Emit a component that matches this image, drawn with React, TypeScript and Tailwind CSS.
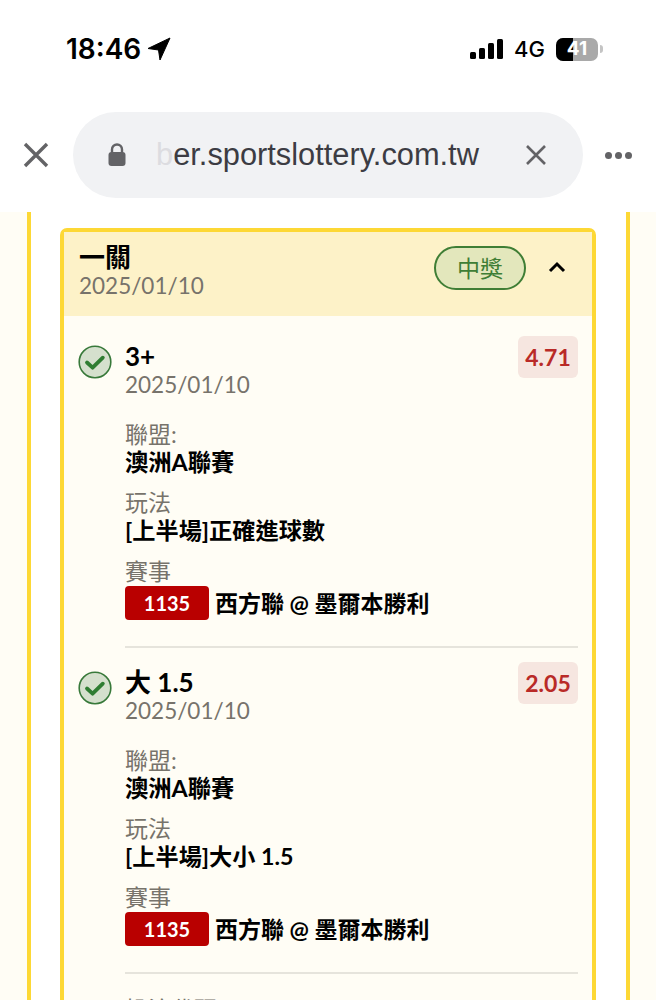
const FONT = "font-['Lato','Noto_Sans_CJK_TC','Noto_Sans',sans-serif]";

function Check() {
  return (
    <svg width="34" height="34" viewBox="0 0 34 34" className="shrink-0">
      <circle cx="17" cy="17" r="15.8" fill="#d5e0cd" stroke="#38793a" strokeWidth="1.6" />
      <path d="M9 17.5l5.6 5.2 10.2-10" fill="none" stroke="#2f7d32" strokeWidth="3.8" strokeLinecap="round" strokeLinejoin="round" />
    </svg>
  );
}

function Bet({ name, odds, play, first }: { name: string; odds: string; play: string; first?: boolean }) {
  return (
    <div className={first ? "flex gap-[13px] pt-5 px-[14px]" : "flex gap-[13px] pt-[14px] px-[14px]"}>
      <div className="pt-[9px]"><Check /></div>
      <div className="flex-1 min-w-0">
        <div className="flex justify-between items-start">
          <div className="pt-[5px]">
            <div className="text-[26px] leading-[31px] font-bold text-black">{name}</div>
            <div className="text-[22.5px] leading-[25px] text-[#77736b]">2025/01/10</div>
          </div>
          <div className="w-[60px] h-[42px] rounded-md bg-[#f6e6e0] text-[#b92a27] text-[23px] font-bold flex items-center justify-center">{odds}</div>
        </div>
        <div className="mt-[23px] text-[23px] leading-[28px] text-[#77736b]">聯盟:</div>
        <div className="text-[23.3px] leading-[28px] font-bold text-black">澳洲A聯賽</div>
        <div className="mt-[12px] text-[23px] leading-[28px] text-[#77736b]">玩法</div>
        <div className="text-[23.2px] leading-[28px] font-bold text-black">{play}</div>
        <div className="mt-[13px] text-[23px] leading-[28px] text-[#77736b]">賽事</div>
        <div className="mt-px flex items-center gap-[6px]">
          <div className="w-[84px] h-[34px] rounded bg-[#b90000] text-white text-[20px] font-bold flex items-center justify-center">1135</div>
          <div className="text-[23px] leading-[34px] font-bold text-black whitespace-nowrap">西方聯 @ 墨爾本勝利</div>
        </div>
        <div className="mt-[26px] border-b-2 border-[#e6e4dc]" />
      </div>
    </div>
  );
}

export default function App() {
  return (
    <div className={`${FONT} w-[656px] h-[1000px] overflow-hidden bg-white flex flex-col`}>
      <div className="h-[112px] shrink-0">
        <div className="h-[98px] pl-[66px] pr-[53px] flex items-center justify-between">
          <div className="flex items-center gap-[6px]">
            <span className="font-['Inter',sans-serif] text-[28px] font-semibold text-black">18:46</span>
            <svg width="24" height="24" viewBox="0 0 24 24"><path d="M23 1L1 11.5l10.5 1.5L13 23z" fill="#000" stroke="#000" strokeLinejoin="round" /></svg>
          </div>
          <div className="flex items-center gap-[11px]">
            <svg width="33" height="22" viewBox="0 0 33 22">
              <rect x="0" y="14" width="6" height="7" rx="1.5" fill="#000" />
              <rect x="9" y="10" width="6" height="11" rx="1.5" fill="#000" />
              <rect x="18" y="5" width="6" height="16" rx="1.5" fill="#000" />
              <rect x="27" y="1" width="6" height="20" rx="1.5" fill="#000" />
            </svg>
            <span className="font-['Inter',sans-serif] text-[22px] font-medium text-black">4G</span>
            <div className="flex items-center gap-[2px]">
              <div className="relative w-[42px] h-[23px] rounded-[7px] bg-[#a9a9a9] overflow-hidden">
                <div className="h-full w-[17px] bg-black" />
                <span className="absolute inset-0 flex items-center justify-center text-white text-[19px] font-bold font-['Inter',sans-serif]">41</span>
              </div>
              <div className="w-[3px] h-[8px] rounded-r-full bg-[#c4c4c4]" />
            </div>
          </div>
        </div>
      </div>
      <div className="h-[100px] shrink-0 flex items-start">
        <div className="w-[73px] h-[86px] flex items-center justify-center pr-[2px]">
          <svg width="26" height="26" viewBox="0 0 26 26"><path d="M2 2l22 22M24 2L2 24" stroke="#636366" strokeWidth="3.4" /></svg>
        </div>
        <div className="w-[510px] h-[86px] rounded-[43px] bg-[#f1f2f4] flex items-center pl-[34px] pr-[36px]">
          <svg width="20" height="24" viewBox="0 0 20 24" className="shrink-0"><rect x="1.5" y="9" width="17" height="14" rx="3" fill="#636366" /><path d="M5 10V6.5a5 5 0 0110 0V10" fill="none" stroke="#636366" strokeWidth="2.4" /></svg>
          <div className="ml-[29px] pt-px flex-1 text-[30.8px] font-['Liberation_Sans',sans-serif] text-[#3c3c43] whitespace-nowrap overflow-hidden">
            <span className="text-[#dcdce0]">b</span>er.sportslottery.com.tw
          </div>
          <svg width="22" height="22" viewBox="0 0 22 22" className="shrink-0"><path d="M2 2l18 18M20 2L2 20" stroke="#636366" strokeWidth="2.6" /></svg>
        </div>
        <div className="flex-1 h-[86px] flex items-center justify-center gap-[3px] pr-[2px]">
          <span className="w-[7px] h-[7px] rounded-full bg-[#636366]" />
          <span className="w-[7px] h-[7px] rounded-full bg-[#636366]" />
          <span className="w-[7px] h-[7px] rounded-full bg-[#636366]" />
        </div>
      </div>
      <div className="flex-1 bg-[#fffdf5] min-h-0">
        <div className="ml-[27px] w-[603px] h-full bg-white border-x-[4px] border-[#fdd835] pl-[29px] pr-[30px] pt-[16px]">
          <div className="border-x-[4px] border-t-[4px] border-[#fdd835] rounded-t-[7px] bg-[#fffdf5] h-[900px]">
            <div className="h-[84px] bg-[#fdf2c8] pl-[15px] pr-[26px] flex items-start justify-between pt-[10px]">
              <div>
                <div className="text-[26px] leading-[30px] font-bold text-black">一關</div>
                <div className="text-[22.5px] leading-[28px] text-[#77736b]">2025/01/10</div>
              </div>
              <div className="mt-[4px] flex items-center gap-[22px]">
                <div className="w-[92px] h-[44px] rounded-full border-2 border-[#3f7e35] bg-[#e3e7bc] text-[#3f7e35] text-[23px] flex items-center justify-center">中獎</div>
                <svg width="18" height="12" viewBox="0 0 18 12" className="mb-[3px]"><path d="M2 10l7-7 7 7" fill="none" stroke="#000" strokeWidth="3" /></svg>
              </div>
            </div>
            <Bet first name="3+" odds="4.71" play="[上半場]正確進球數" />
            <Bet name="大 1.5" odds="2.05" play="[上半場]大小 1.5" />
            <div className="pl-[61px] pt-[21px] text-[23px] leading-[28px] text-[#77736b]">投注代碼: 1135.35</div>
          </div>
        </div>
      </div>
    </div>
  );
}
